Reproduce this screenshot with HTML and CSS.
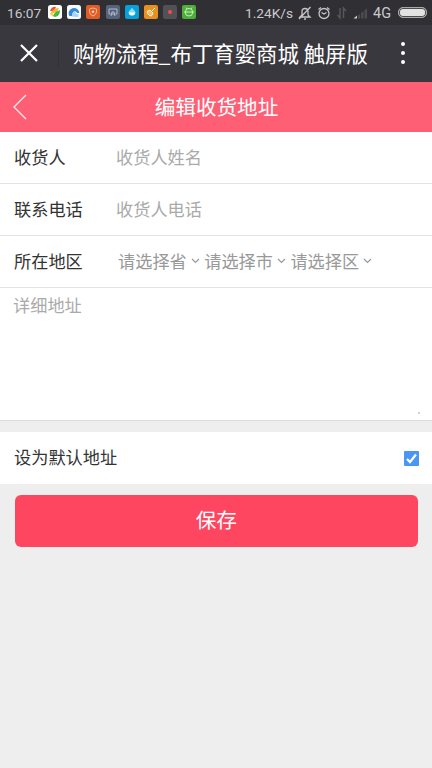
FILE: index.html
```html
<!DOCTYPE html>
<html lang="zh-CN">
<head>
<meta charset="UTF-8">
<meta name="viewport" content="width=device-width, initial-scale=1">
<title>购物流程_布丁育婴商城 触屏版</title>
<link rel="stylesheet" href="styles.css">
</head>
<body>
<div class="status">
  <span class="clock">16:07</span>
  <div class="apps">
    <svg viewBox="0 0 14 14"><rect width="14" height="14" rx="2.5" fill="#fff"/><path d="M2 6Q4 1 8 2L6 6Z" fill="#ee4e42"/><path d="M2 9Q5 3 11 3L9 7Z" fill="#fbb324"/><path d="M5 11Q6 7 12 5Q12 11 7 12Z" fill="#43b948"/><path d="M2 9L5 7L5 12Z" fill="#f3d52d"/></svg>
    <svg viewBox="0 0 14 14"><rect width="14" height="14" rx="2.5" fill="#f5faff"/><path d="M2.500 11A5.300 5.300 0 1 1 12.300 8Q9.500 8.500 9 6.500Q5.500 5.500 5 11Z" fill="#3189d8"/><path d="M5 11.500Q5 7 8 7Q9 10 12 9L11 12Z" fill="#a8d2f2"/></svg>
    <svg viewBox="0 0 14 14"><rect width="14" height="14" rx="2" fill="#e15d27"/><path d="M7 3L10.500 4V7Q10 10 7 11Q4 10 3.500 7V4Z" fill="none" stroke="#f8b592"/><circle cx="7" cy="6.700" r="1.300" fill="#ffd0b5"/></svg>
    <svg viewBox="0 0 14 14"><rect width="14" height="14" rx="2" fill="#56637b"/><path d="M3 4H11V9H9.500M4.500 9H3V4M5 11L6 7H8L9 11M5.500 9H8.500" fill="none" stroke="#b3bccb"/></svg>
    <svg viewBox="0 0 14 14"><rect width="14" height="14" rx="2" fill="#05a3d9"/><path d="M7 2.800L10.500 7A3.500 3.500 0 1 1 3.500 7Z" fill="#8edbf3"/><path d="M4 7.500H10A3 3 0 0 1 4 7.500" fill="#fff"/></svg>
    <svg viewBox="0 0 14 14"><rect width="14" height="14" rx="2" fill="#e99120"/><path d="M11 3L8 6M3 6.500L6 5L9 8L7.500 11L5.500 10.500L3.500 8.500Z" fill="#f5bd73" stroke="#fff1dc"/></svg>
    <svg viewBox="0 0 14 14"><rect width="14" height="14" rx="2" fill="#525256"/><circle cx="7" cy="7" r="2" fill="#ef4e50"/></svg>
    <svg viewBox="0 0 14 14"><rect width="14" height="14" rx="2" fill="#4eae3c"/><path d="M4 2.500L5 4M10 2.500L9 4M3.500 6.500A3.500 3 0 0 1 10.500 6.500V8A3.500 3 0 0 1 3.500 8ZM2 7H12" fill="none" stroke="#c6f0b8"/></svg>
  </div>
  <span class="speed">1.24K/s</span>
  <svg class="sysicons" viewBox="0 0 70 16" fill="none">
    <g stroke="#c6c6c9" stroke-width="1.300"><path d="M2 12L4 10V6.500Q4 3.500 7 3.500Q10 3.500 10 6.500V10L12 12ZM6 14H8M12.500 2L1 14"/><circle cx="26" cy="8.500" r="5"/><path d="M23.500 7.500L26 9L28.500 7.500M20.500 4.500L23 2.500M31.500 4.500L29 2.500"/></g>
    <path d="M42 3V13L39.500 10M45.500 13V3L48 6" stroke="#56565b" stroke-width="1.500"/>
    <path d="M55.500 13.500L59 10.500V13.500Z" fill="#d0d0d2"/><path d="M60 13.500V10.500L62 9V13.500ZM63 13.500V8L65.500 6V13.500ZM66.500 13.500V5.500L69 3.500V13.500Z" fill="#4c4c51"/>
  </svg>
  <span class="net">4G</span>
  <span class="battery"></span>
</div>
<div class="titlebar">
  <svg class="close" viewBox="0 0 18 18"><path d="M1 1L17 17M17 1L1 17" stroke="#fff" stroke-width="2.200"/></svg>
  <span class="divider"></span>
  <span class="page-title">购物流程_布丁育婴商城 触屏版</span>
  <span class="more"><i></i><i></i><i></i></span>
</div>
<header class="header">
  <svg class="back" viewBox="0 0 14 26"><path d="M13 1L1 13L13 25" fill="none" stroke="#ffe6ea" stroke-width="1.400"/></svg>
  <h1>编辑收货地址</h1>
</header>
<main>
  <div class="row"><span class="label">收货人</span><span class="hint">收货人姓名</span></div>
  <div class="row"><span class="label">联系电话</span><span class="hint">收货人电话</span></div>
  <div class="row"><span class="label">所在地区</span>
    <div class="selects">
      <span class="select">请选择省<svg viewBox="0 0 9 6"><path d="M1 1L4.500 4.500L8 1"/></svg></span>
      <span class="select">请选择市<svg viewBox="0 0 9 6"><path d="M1 1L4.500 4.500L8 1"/></svg></span>
      <span class="select">请选择区<svg viewBox="0 0 9 6"><path d="M1 1L4.500 4.500L8 1"/></svg></span>
    </div>
  </div>
  <div class="address">详细地址<span class="grip"></span></div>
  <div class="row default"><span>设为默认地址</span>
    <svg class="check" viewBox="0 0 15 15"><rect width="15" height="15" rx="1" fill="#4a96f5"/><path d="M3 8L6 11L12 3.500" fill="none" stroke="#fff" stroke-width="2.200"/></svg>
  </div>
  <div class="save">保存</div>
</main>
</body>
</html>
```
FILE: styles.css
```css
* { box-sizing: border-box; }
body {
  margin: 0;
  height: 768px;
  overflow: hidden;
  background: #eee;
  color: #333;
  font-family: "Noto Sans CJK SC", sans-serif;
  font-size: 17.2px;
}
svg { display: block; flex: none; }
span { white-space: nowrap; }
.status {
  display: flex;
  align-items: center;
  height: 25px;
  padding-left: 7px;
  background: #302f34;
  color: #c9c9cc;
  font: 13.7px/25px Roboto, sans-serif;
}
.status > span:not(.battery) { padding-top: 1px; }
.clock { width: 41px; }
.apps { display: flex; gap: 5.2px; width: 197px; padding-bottom: 1px; }
.apps svg { width: 14px; height: 14px; }
.speed { width: 53px; }
.sysicons { width: 70px; height: 16px; }
.net { margin-left: 5px; width: 25px; font-size: 14.5px; }
.battery {
  width: 29px;
  height: 11px;
  border: 1px solid #aaaaad;
  border-radius: 5px;
  background: #e2e2e3;
  box-shadow: inset 0 0 0 1px #4b4b50;
}
.titlebar {
  display: flex;
  align-items: center;
  height: 57px;
  padding: 0 0 1px 20px;
  background: #39383e;
  color: #fff;
}
.close { width: 18px; height: 18px; }
.divider { width: 1px; height: 28px; margin: 0 14px 0 20px; background: #323136; }
.page-title { width: 328px; padding-bottom: 1px; font-size: 21.4px; line-height: 30px; }
.more { display: flex; flex-direction: column; gap: 5px; }
.more i { width: 4px; height: 4px; border-radius: 50%; background: #fff; }
.header {
  display: flex;
  align-items: center;
  height: 50px;
  padding-left: 13px;
  background: #ff5f75;
  color: #fff;
}
.back { width: 14px; height: 26px; }
.header h1 { flex: 1; margin: 0 27px 0 0; padding: 0 0 2px 1px; text-align: center; font-size: 20.6px; font-weight: 400; line-height: 30px; }
.row {
  display: flex;
  align-items: center;
  height: 52px;
  padding: 0 0 2px 14px;
  border-bottom: 1px solid #e3e3e3;
  background: #fff;
  line-height: 26px;
}
.label { width: 102px; }
.hint { color: #aaa; }
.selects { display: flex; padding-left: 2px; color: #999; }
.select { display: flex; align-items: center; width: 86.2px; }
.select svg { width: 9px; height: 6px; margin-left: 4px; fill: none; stroke: #999; stroke-width: 1.2; }
.address {
  display: flex;
  justify-content: space-between;
  height: 133px;
  padding: 4px 12px 6px 13px;
  border-bottom: 1px solid #dcdcdc;
  background: #fff;
  color: #aaa;
  line-height: 26px;
}
.grip { align-self: flex-end; width: 2px; height: 2px; background: #d2d2d2; }
.default {
  justify-content: space-between;
  margin-top: 11px;
  padding-right: 13px;
  border-bottom: 0;
}
.default .check { margin-top: 2px; }
.check { width: 15px; height: 15px; }
.save {
  height: 52px;
  margin: 10.500px 14px 0 14.500px;
  border-radius: 6px;
  background: #ff4661;
  color: #fff;
  font-size: 20.6px;
  line-height: 48px;
  text-align: center;
}
```
